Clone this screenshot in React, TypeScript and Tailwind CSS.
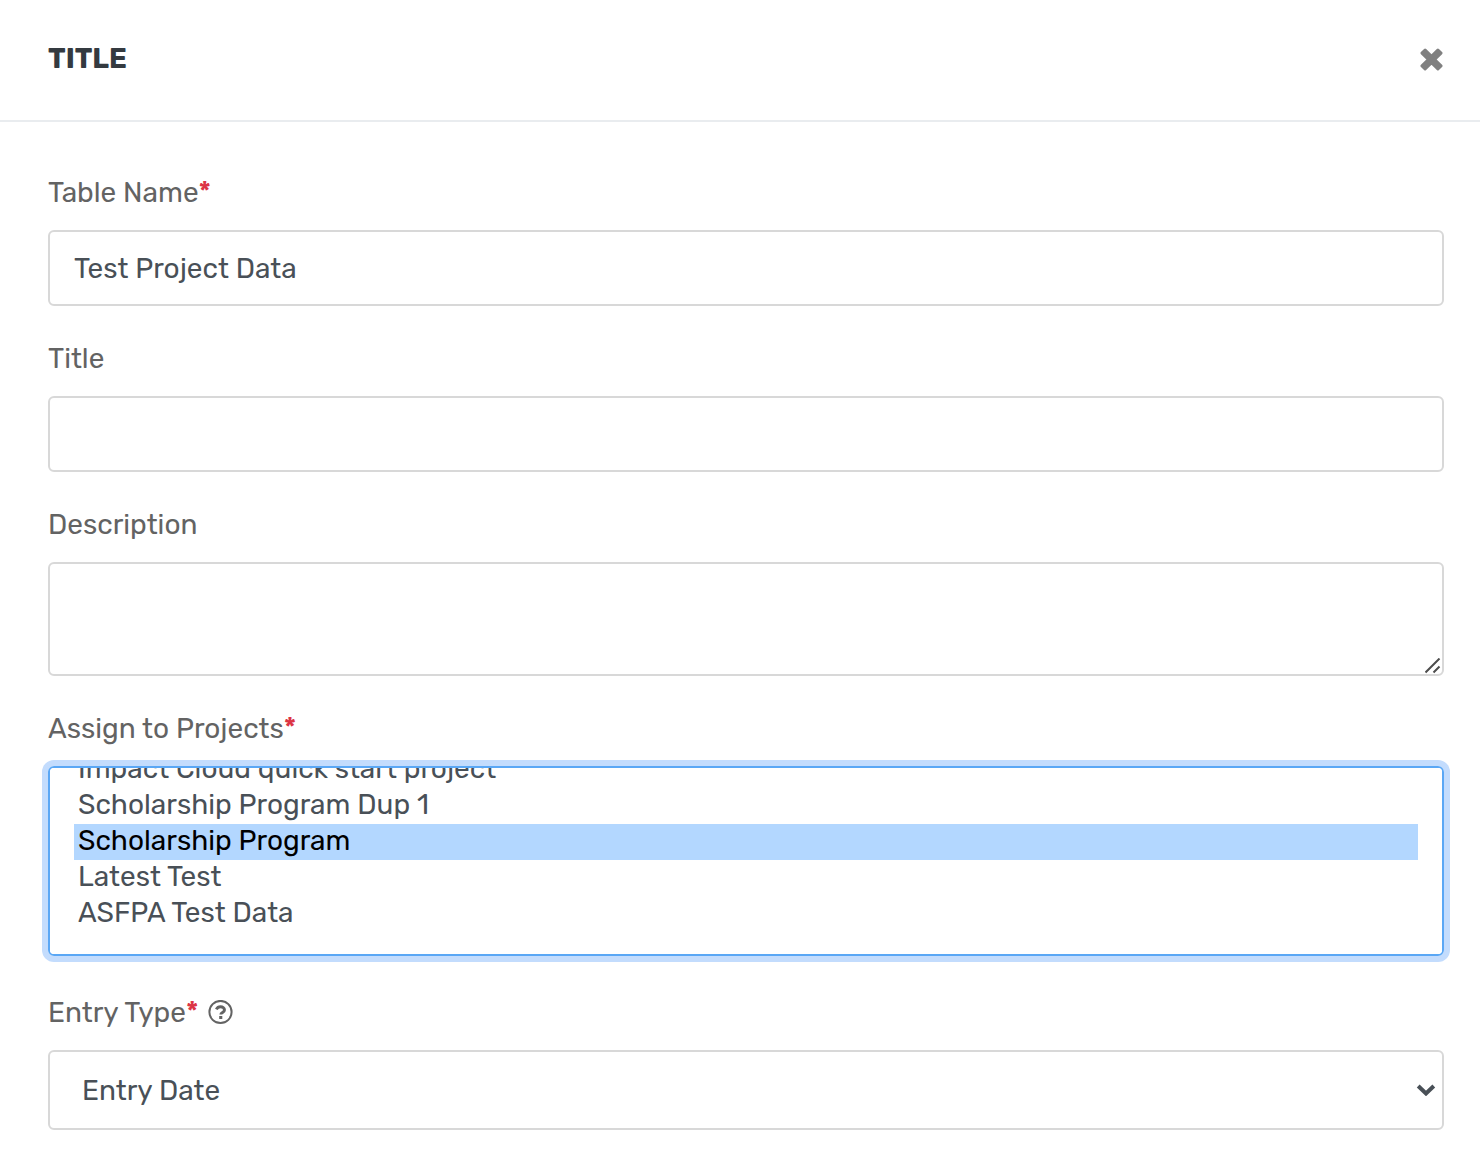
import { useEffect, useRef } from 'react';
import type { ReactNode } from 'react';

const projects = [
  'Community Outreach',
  'Impact Cloud quick start project',
  'Scholarship Program Dup 1',
  'Scholarship Program',
  'Latest Test',
  'ASFPA Test Data',
];

const fieldClass =
  'block w-full rounded-md border-2 border-[#d8d8d8] bg-white text-[28px] leading-[42px] text-[#495057] outline-none focus:border-[#5aa7f5] focus:ring-6 focus:ring-[#c3dcfd]';

interface FieldProps {
  id: string;
  label: string;
  required?: boolean;
  hint?: ReactNode;
  children: ReactNode;
}

const Field: React.FC<FieldProps> = ({ id, label, required, hint, children }) => (
  <div>
    <div className="mb-4 flex h-[42px] items-center">
      <label htmlFor={id} className="text-[28px] leading-[42px] text-[#636363]">
        {label}
        {required && <span className="font-medium text-[#dc3545]">*</span>}
      </label>
      {hint}
    </div>
    {children}
  </div>
);

const HelpIcon = () => (
  <svg viewBox="0 0 26 26" className="ml-[10px] h-[26px] w-[26px] text-[#636363]" fill="none" stroke="currentColor">
    <circle cx="12.5" cy="12" r="11.1" strokeWidth="2" />
    <path d="M8.3 9.4C9.2 7.7 10.6 6.8 12.5 6.8c2.2 0 4 1.2 4 3.1 0 2.5-3.7 2.5-3.7 4.7" strokeWidth="2.9" />
    <path d="M11.2 16h3.1v3h-3.1z" fill="currentColor" stroke="none" />
  </svg>
);

const App: React.FC = () => {
  const listRef = useRef<HTMLSelectElement>(null);

  useEffect(() => {
    if (!listRef.current) return;
    listRef.current.focus({ preventScroll: true });
    listRef.current.scrollTop = 64;
  }, []);

  return (
    <div className="min-h-screen bg-white font-['Rubik','Roboto',sans-serif]">
      <header className="flex items-center justify-between border-b-2 border-[#e9ecef] pt-[38px] pr-9 pb-10 pl-12">
        <h1 className="text-[28px] leading-[42px] font-bold text-[#343a40]">TITLE</h1>
        <button type="button" aria-label="Close" className="text-[#808080]">
          <svg viewBox="0 0 24 24" className="h-6 w-6" stroke="currentColor" strokeWidth="3" strokeLinejoin="round">
            <path
              d="M5.1 3L11.5 9.4L17.9 3L21 6.1L14.6 12.5L21 18.9L17.9 22L11.5 15.6L5.1 22L2 18.9L8.4 12.5L2 6.1Z"
              fill="currentColor"
            />
          </svg>
        </button>
      </header>

      <form className="flex flex-col gap-8 pt-[50px] pr-9 pb-8 pl-12">
        <Field id="table-name" label="Table Name" required>
          <input id="table-name" type="text" defaultValue="Test Project Data" className={`${fieldClass} h-[76px] px-6`} />
        </Field>
        <Field id="title" label="Title">
          <input id="title" type="text" className={`${fieldClass} h-[76px] px-6`} />
        </Field>
        <Field id="description" label="Description">
          <div className="relative">
            <textarea id="description" className={`${fieldClass} h-[114px] px-6 [&::-webkit-resizer]:bg-transparent`} />
            <svg
              viewBox="0 0 16 16"
              className="pointer-events-none absolute right-[3px] bottom-[2px] h-4 w-4"
              stroke="#4d4d4d"
              strokeWidth="2"
            >
              <path d="M0.5 14.5L14.5 0.5M8.5 14.5L14.5 8.5" />
            </svg>
          </div>
        </Field>
        <Field id="projects" label="Assign to Projects" required>
          <div className="pb-1">
            <select
              ref={listRef}
              id="projects"
              multiple
              defaultValue={['Scholarship Program']}
              className={`${fieldClass} h-[190px] px-6 pt-3 pb-6`}
            >
              {projects.map((p) => (
                <option
                  key={p}
                  value={p}
                  className="h-9 px-1 leading-9 checked:bg-[linear-gradient(#b3d7ff,#b3d7ff)] checked:[-webkit-text-fill-color:black]"
                >
                  {p}
                </option>
              ))}
            </select>
          </div>
        </Field>
        <Field id="entry-type" label="Entry Type" required hint={<HelpIcon />}>
          <div className="relative">
            <select id="entry-type" className={`${fieldClass} h-20 appearance-none pt-0.5 pr-12 pl-8`}>
              <option>Entry Date</option>
            </select>
            <svg
              viewBox="0 0 20 12"
              className="pointer-events-none absolute top-[34px] right-2 h-3 w-5"
              fill="none"
              stroke="#495057"
              strokeWidth="4"
            >
              <path d="M2.2 2L10 9.5L17.8 2" />
            </svg>
          </div>
        </Field>
      </form>
    </div>
  );
};

export default App;
